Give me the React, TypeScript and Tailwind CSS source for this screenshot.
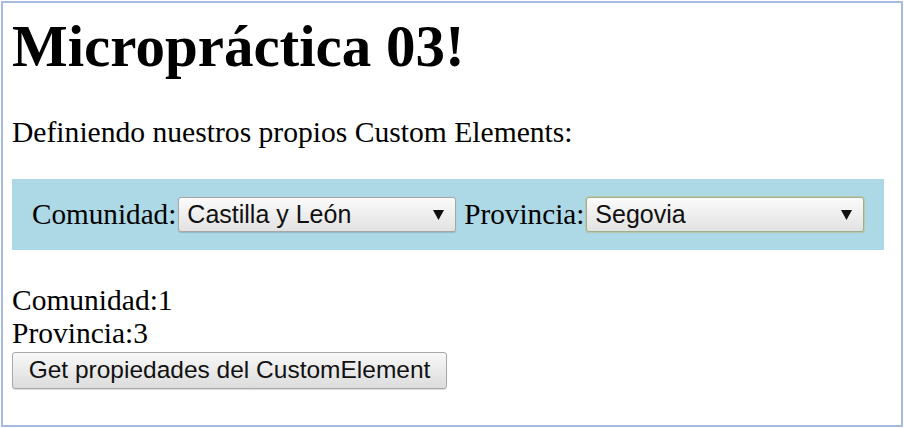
import React from 'react';

// Desplegable con aspecto de <select> nativo
const FakeSelect: React.FC<{ value: string; focused?: boolean }> = ({ value, focused }) => (
  <div
    className={
      'ml-[2px] flex h-[35px] w-[278px] items-center justify-between rounded-[3px] border bg-gradient-to-b from-[#fbfbfb] to-[#e2e2e2] pl-[8px] pr-[11px] shadow-[0_1px_1px_rgba(0,0,0,0.15)] ' +
      (focused ? 'border-[#9cb08c] ring-1 ring-[#b9c9a8]' : 'border-[#a6a6a6]')
    }
    style={{ fontFamily: '"Liberation Sans", Arial, sans-serif' }}
  >
    <span className="text-[25px] leading-none text-[#111]">{value}</span>
    <svg width="11" height="10" viewBox="0 0 11 10">
      <path d="M0 0 L11 0 L5.5 10 Z" fill="#111" />
    </svg>
  </div>
);

export default function App() {
  return (
    <div className="h-[428px] w-[904px] bg-white p-px">
      <div
        className="flex h-[426px] w-[902px] flex-col border-2 border-[#a6bbdf] px-[9px] text-black"
        style={{ fontFamily: '"Liberation Serif", "Times New Roman", serif' }}
      >
        <h1 className="pt-[10px] text-[59px] font-bold leading-[66px]">Micropráctica 03!</h1>

        <p className="mt-[36px] text-[29.6px] leading-[34px]">Definiendo nuestros propios Custom Elements:</p>

        <div className="mt-[30px] flex h-[71px] w-[872px] items-center bg-[#add8e6] pl-[20px] text-[29.2px]">
          <span>Comunidad:</span>
          <FakeSelect value="Castilla y León" />
          <span className="ml-[8px]">Provincia:</span>
          <FakeSelect value="Segovia" focused />
        </div>

        <div className="mt-[34px] text-[29.5px] leading-[33px]">
          <div>Comunidad:1</div>
          <div>Provincia:3</div>
        </div>

        <button
          type="button"
          className="mt-[2px] h-[37px] w-[435px] rounded-[3px] border border-[#a9a9a9] bg-gradient-to-b from-[#f8f8f8] to-[#dcdcdc] text-[24.5px] leading-none text-[#111] shadow-[0_1px_1px_rgba(0,0,0,0.15)]"
          style={{ fontFamily: '"Liberation Sans", Arial, sans-serif' }}
        >
          Get propiedades del CustomElement
        </button>
      </div>
    </div>
  );
}
